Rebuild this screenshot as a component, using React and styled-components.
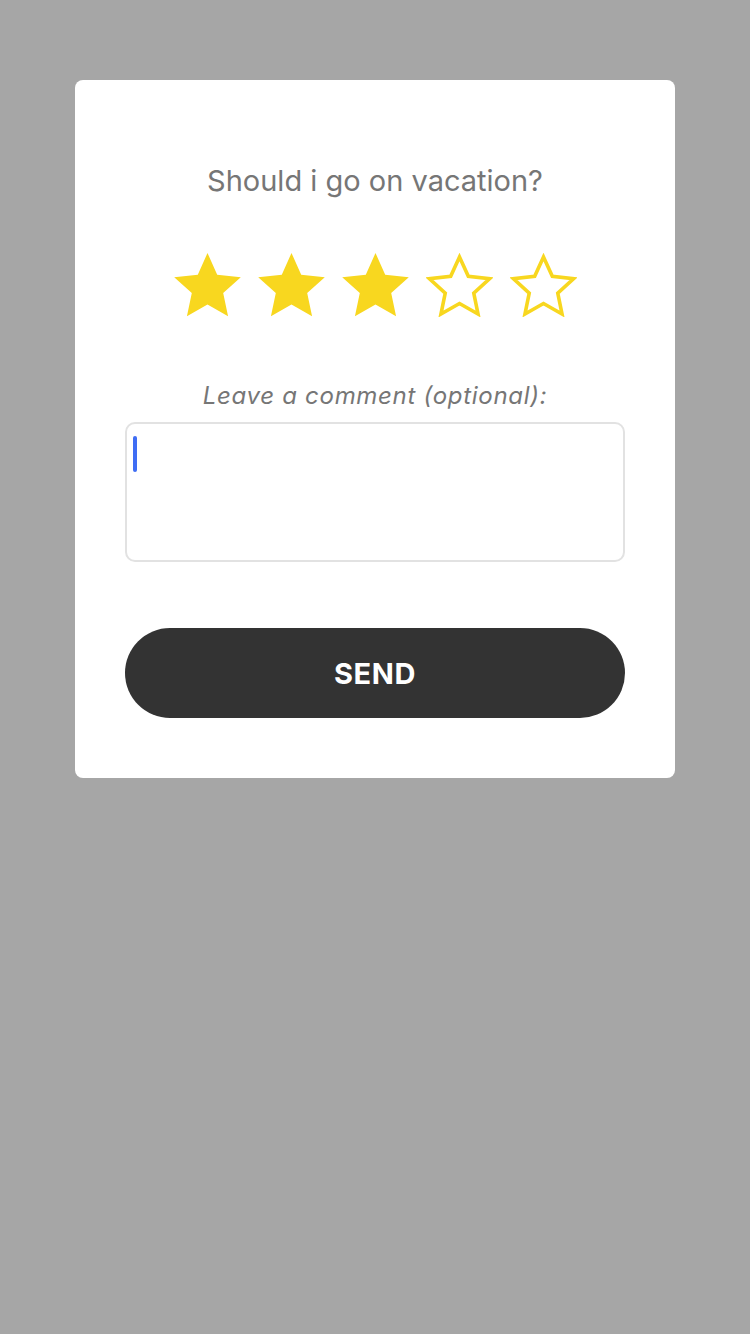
import React, { useState } from 'react';
import styled, { createGlobalStyle } from 'styled-components';

const GlobalStyle = createGlobalStyle`
  html, body {
    margin: 0;
    padding: 0;
    background: #a6a6a6;
    font-family: Inter, 'Noto Sans', sans-serif;
  }
`;

const Page = styled.div`
  min-height: 1334px;
  padding-top: 80px;
  box-sizing: border-box;
  display: flex;
  justify-content: center;
  align-items: flex-start;
`;

const Card = styled.div`
  width: 600px;
  box-sizing: border-box;
  background: #ffffff;
  border-radius: 8px;
  padding: 80px 50px 60px;
  display: flex;
  flex-direction: column;
  align-items: center;
`;

const Question = styled.h2`
  margin: 0;
  font-size: 29px;
  line-height: 42px;
  font-weight: 400;
  color: #767676;
  text-align: center;
`;

const Stars = styled.div`
  display: flex;
  gap: 17px;
  margin-top: 51px;
`;

const StarButton = styled.button`
  border: none;
  background: none;
  padding: 0;
  margin: 0;
  width: 67px;
  height: 64px;
  cursor: pointer;
  display: block;
`;

const Label = styled.label`
  margin-top: 61px;
  font-size: 24px;
  line-height: 36px;
  font-style: italic;
  letter-spacing: 0.7px;
  color: #767676;
`;

const Field = styled.div`
  position: relative;
  width: 100%;
  margin-top: 8px;
`;

const Comment = styled.textarea`
  display: block;
  width: 100%;
  height: 140px;
  box-sizing: border-box;
  border: 2px solid #e2e2e2;
  border-radius: 10px;
  padding: 12px 10px;
  resize: none;
  outline: none;
  font-family: Inter, sans-serif;
  font-size: 24px;
  color: #333;
  caret-color: transparent;
`;

const Caret = styled.span`
  position: absolute;
  left: 8px;
  top: 14px;
  width: 4px;
  height: 36px;
  border-radius: 2px;
  background: #3f6df4;
  pointer-events: none;
`;

const SendButton = styled.button`
  margin-top: 66px;
  width: 100%;
  height: 90px;
  border: none;
  border-radius: 45px;
  background: #333333;
  color: #ffffff;
  font-family: Inter, sans-serif;
  font-size: 29px;
  font-weight: 700;
  letter-spacing: 0.6px;
  padding-top: 2px;
  cursor: pointer;
`;

const starPoints = (cx, cy, R, r) => {
  const pts = [];
  for (let i = 0; i < 10; i++) {
    const rad = i % 2 === 0 ? R : r;
    const a = (Math.PI / 5) * i - Math.PI / 2;
    pts.push(`${(cx + rad * Math.cos(a)).toFixed(2)},${(cy + rad * Math.sin(a)).toFixed(2)}`);
  }
  return pts.join(' ');
};

const Star = ({ filled }) => (
  <svg width="67" height="64" viewBox="0 0 67 64">
    {filled ? (
      <polygon points={starPoints(33.5, 35, 35, 16.5)} fill="#f8d71f" />
    ) : (
      <polygon
        points={starPoints(33.5, 35.5, 31.5, 15)}
        fill="none"
        stroke="#f8d71f"
        strokeWidth="3.6"
        strokeLinejoin="miter"
      />
    )}
  </svg>
);

const App = () => {
  const [rating, setRating] = useState(3);
  const [comment, setComment] = useState('');

  return (
    <Page>
      <GlobalStyle />
      <Card>
        <Question>Should i go on vacation?</Question>
        <Stars>
          {[1, 2, 3, 4, 5].map((n) => (
            <StarButton key={n} onClick={() => setRating(n)} aria-label={`${n} stars`}>
              <Star filled={n <= rating} />
            </StarButton>
          ))}
        </Stars>
        <Label htmlFor="comment">Leave a comment (optional):</Label>
        <Field>
          <Comment id="comment" value={comment} onChange={(e) => setComment(e.target.value)} />
          {comment === '' && <Caret />}
        </Field>
        <SendButton>SEND</SendButton>
      </Card>
    </Page>
  );
};

export default App;
